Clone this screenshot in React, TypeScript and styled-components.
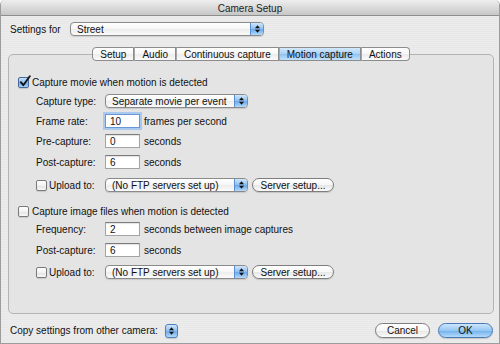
import React from "react";
import styled, { createGlobalStyle } from "styled-components";

const GlobalStyle = createGlobalStyle`
  html, body { margin: 0; padding: 0; background: #ffffff; }
  body { font-family: "Liberation Sans", Arial, sans-serif; font-size: 10px; color: #111; }
  * { box-sizing: border-box; }
`;

const Window = styled.div`
  width: 500px;
  height: 344px;
  display: flex;
  flex-direction: column;
  border: 1px solid #9c9c9c;
  border-top: none;
  border-radius: 5px 5px 0 0;
  overflow: hidden;
  background: repeating-linear-gradient(
    to bottom,
    #ececec 0px,
    #ececec 1px,
    #e8e8e8 1px,
    #e8e8e8 2px
  );
`;

const TitleBar = styled.div`
  height: 16px;
  flex: none;
  display: flex;
  align-items: center;
  justify-content: center;
  border-bottom: 1px solid #8e8e8e;
  background: linear-gradient(#eeeeee, #dadada 50%, #c7c7c7);
  color: #1c1c1c;
  font-size: 10px;
  padding-top: 1px;
`;

const SettingsRow = styled.div`
  margin-top: 6px;
  padding-left: 9px;
  height: 14px;
  display: flex;
  align-items: center;
  flex: none;
`;

const SettingsLabel = styled.span`
  width: 60px;
`;

const PopupBox = styled.div<{ $w: number }>`
  width: ${(p) => p.$w}px;
  height: 14px;
  display: flex;
  align-items: stretch;
  border: 1px solid #8a8a8a;
  border-radius: 4px;
  background: linear-gradient(#ffffff, #f6f6f6 50%, #ececec 51%, #fbfbfb);
  box-shadow: 0 1px 1px rgba(0, 0, 0, 0.12);
  overflow: hidden;
  flex: none;
`;

const PopupText = styled.span`
  flex: 1;
  display: flex;
  align-items: center;
  padding-left: 6px;
  white-space: nowrap;
`;

const Stepper = styled.span`
  width: 13px;
  flex: none;
  display: flex;
  align-items: center;
  justify-content: center;
  border-left: 1px solid #5b8fd3;
  background: linear-gradient(#cfe6fd, #93c3f2 45%, #6eaaea 55%, #b4daf9);
`;

const SmallStepper = styled.span`
  width: 13px;
  height: 14px;
  flex: none;
  display: flex;
  align-items: center;
  justify-content: center;
  margin-left: 7px;
  border: 1px solid #4f7fbf;
  border-radius: 3px;
  background: linear-gradient(#cfe6fd, #93c3f2 45%, #6eaaea 55%, #b4daf9);
  box-shadow: 0 1px 1px rgba(0, 0, 0, 0.15);
`;

const Arrows = () => (
  <svg width="7" height="10" viewBox="0 0 7 10">
    <path d="M1 4.2 L3.5 1.2 L6 4.2 Z" fill="#111" />
    <path d="M1 5.8 L3.5 8.8 L6 5.8 Z" fill="#111" />
  </svg>
);

const TabArea = styled.div`
  flex: 1;
  display: flex;
  flex-direction: column;
  margin: 11px 5px 0 7px;
`;

const TabBar = styled.div`
  display: flex;
  justify-content: center;
  position: relative;
  z-index: 1;
  height: 14px;
  flex: none;
`;

const Tab = styled.div<{ $active?: boolean }>`
  height: 14px;
  padding: 0 7px;
  display: flex;
  align-items: center;
  white-space: nowrap;
  border: 1px solid #8c8c8c;
  border-left: 1px solid #a6a6a6;
  background: ${(p) =>
    p.$active
      ? "linear-gradient(#d3e9fd, #a9d1f6 50%, #8ec2f1 51%, #c2e1fb)"
      : "linear-gradient(#ffffff, #f7f7f7 50%, #ececec 51%, #fafafa)"};
  &:first-child {
    border-left: 1px solid #8c8c8c;
    border-radius: 4px 0 0 4px;
  }
  &:last-child {
    border-radius: 0 4px 4px 0;
  }
`;

const Panel = styled.div`
  flex: 1;
  margin-top: -7px;
  border: 1px solid #b4b4b4;
  border-radius: 5px;
  background: #e4e4e4;
  padding: 20px 9px 0 9px;
  display: flex;
  flex-direction: column;
`;

const CheckRow = styled.div<{ $gap: number }>`
  height: 14px;
  margin-top: ${(p) => p.$gap}px;
  display: flex;
  align-items: center;
  gap: 3px;
`;

const FieldRow = styled.div<{ $gap: number }>`
  height: 14px;
  margin-top: ${(p) => p.$gap}px;
  margin-left: 18px;
  display: flex;
  align-items: center;
`;

const FieldLabel = styled.span`
  width: 69px;
  flex: none;
  display: flex;
  align-items: center;
  gap: 2px;
  white-space: nowrap;
`;

const BoxMark = styled.span<{ $checked?: boolean }>`
  position: relative;
  width: 11px;
  height: 11px;
  flex: none;
  border: 1px solid ${(p) => (p.$checked ? "#46699c" : "#7a7a7a")};
  border-radius: 2px;
  background: ${(p) =>
    p.$checked
      ? "linear-gradient(#c6e1fb, #8cbdee 50%, #6aa6e6 51%, #a9d3f7)"
      : "linear-gradient(#ffffff, #f2f2f2 50%, #e2e2e2 51%, #f7f7f7)"};
  box-shadow: 0 1px 1px rgba(0, 0, 0, 0.12);
`;

const CheckGlyph = styled.svg`
  position: absolute;
  left: 0px;
  top: -3px;
`;

const Checkbox = ({ checked }: { checked?: boolean }) => (
  <BoxMark $checked={checked}>
    {checked && (
      <CheckGlyph width="12" height="13" viewBox="0 0 12 13">
        <path
          d="M1.8 7.2 L4.3 10.2 L10.8 1.2"
          fill="none"
          stroke="#151515"
          strokeWidth="1.9"
          strokeLinecap="round"
          strokeLinejoin="round"
        />
      </CheckGlyph>
    )}
  </BoxMark>
);

const TextField = styled.input<{ $focused?: boolean }>`
  width: 35px;
  height: 14px;
  flex: none;
  padding: 0 4px;
  margin: 0;
  font-family: "Liberation Sans", Arial, sans-serif;
  font-size: 10px;
  color: #111;
  background: #fff;
  border: 1px solid ${(p) => (p.$focused ? "#6a97d2" : "#a4a4a4")};
  border-top-color: ${(p) => (p.$focused ? "#6a97d2" : "#7c7c7c")};
  box-shadow: ${(p) =>
    p.$focused ? "0 0 0 2px #a9c9ee" : "inset 0 1px 1px rgba(0,0,0,0.12)"};
  outline: none;
`;

const Unit = styled.span`
  margin-left: 4px;
  white-space: nowrap;
`;

const PushButton = styled.span<{ $w: number; $default?: boolean }>`
  width: ${(p) => p.$w}px;
  height: 15px;
  flex: none;
  display: flex;
  align-items: center;
  justify-content: center;
  border-radius: 8px;
  border: 1px solid ${(p) => (p.$default ? "#4a78b4" : "#7d7d7d")};
  background: ${(p) =>
    p.$default
      ? "linear-gradient(#cde6fd, #95c7f4 50%, #71b0ec 51%, #b3dbfb)"
      : "linear-gradient(#ffffff, #f6f6f6 50%, #e6e6e6 51%, #fbfbfb)"};
  box-shadow: 0 1px 1px rgba(0, 0, 0, 0.15);
  white-space: nowrap;
`;

const SideButton = styled(PushButton)`
  height: 14px;
  margin-left: 4px;
  border-radius: 7px;
`;

const BottomBar = styled.div`
  height: 29px;
  flex: none;
  display: flex;
  align-items: center;
  padding: 4px 6px 0 9px;
`;

const Spacer = styled.span`
  flex: 1;
`;

const ButtonGap = styled.span`
  width: 8px;
  flex: none;
`;

const UploadRow = ({ gap }: { gap: number }) => (
  <FieldRow $gap={gap}>
    <FieldLabel>
      <Checkbox />
      <span>Upload to:</span>
    </FieldLabel>
    <PopupBox $w={143}>
      <PopupText>(No FTP servers set up)</PopupText>
      <Stepper>
        <Arrows />
      </Stepper>
    </PopupBox>
    <SideButton $w={82}>Server setup...</SideButton>
  </FieldRow>
);

export default function App() {
  return (
    <>
      <GlobalStyle />
      <Window>
        <TitleBar>Camera Setup</TitleBar>
        <SettingsRow>
          <SettingsLabel>Settings for</SettingsLabel>
          <PopupBox $w={194}>
            <PopupText>Street</PopupText>
            <Stepper>
              <Arrows />
            </Stepper>
          </PopupBox>
        </SettingsRow>
        <TabArea>
          <TabBar>
            <Tab>Setup</Tab>
            <Tab>Audio</Tab>
            <Tab>Continuous capture</Tab>
            <Tab $active>Motion capture</Tab>
            <Tab>Actions</Tab>
          </TabBar>
          <Panel>
            <CheckRow $gap={0}>
              <Checkbox checked />
              <span>Capture movie when motion is detected</span>
            </CheckRow>
            <FieldRow $gap={5}>
              <FieldLabel>Capture type:</FieldLabel>
              <PopupBox $w={143}>
                <PopupText>Separate movie per event</PopupText>
                <Stepper>
                  <Arrows />
                </Stepper>
              </PopupBox>
            </FieldRow>
            <FieldRow $gap={6}>
              <FieldLabel>Frame rate:</FieldLabel>
              <TextField $focused defaultValue="10" />
              <Unit>frames per second</Unit>
            </FieldRow>
            <FieldRow $gap={6}>
              <FieldLabel>Pre-capture:</FieldLabel>
              <TextField defaultValue="0" />
              <Unit>seconds</Unit>
            </FieldRow>
            <FieldRow $gap={7}>
              <FieldLabel>Post-capture:</FieldLabel>
              <TextField defaultValue="6" />
              <Unit>seconds</Unit>
            </FieldRow>
            <UploadRow gap={9} />

            <CheckRow $gap={12}>
              <Checkbox />
              <span>Capture image files when motion is detected</span>
            </CheckRow>
            <FieldRow $gap={4}>
              <FieldLabel>Frequency:</FieldLabel>
              <TextField defaultValue="2" />
              <Unit>seconds between image captures</Unit>
            </FieldRow>
            <FieldRow $gap={7}>
              <FieldLabel>Post-capture:</FieldLabel>
              <TextField defaultValue="6" />
              <Unit>seconds</Unit>
            </FieldRow>
            <UploadRow gap={8} />
          </Panel>
        </TabArea>
        <BottomBar>
          <span>Copy settings from other camera:</span>
          <SmallStepper>
            <Arrows />
          </SmallStepper>
          <Spacer />
          <PushButton $w={55}>Cancel</PushButton>
          <ButtonGap />
          <PushButton $w={55} $default>
            OK
          </PushButton>
        </BottomBar>
      </Window>
    </>
  );
}
